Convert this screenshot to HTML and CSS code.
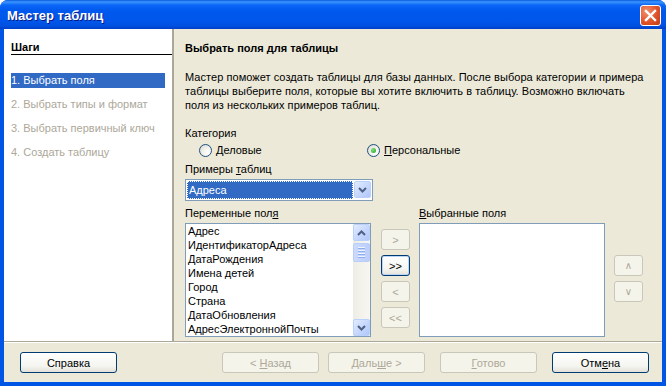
FILE: index.html
```html
<!DOCTYPE html>
<html lang="ru">
<head>
    <meta charset="UTF-8">
    <title>Мастер таблиц</title>
    <link rel="stylesheet" href="styles.css">
</head>
<body>
<div class="window">
    <div class="titlebar">
        <span class="title">Мастер таблиц</span>
        <div class="close">
            <svg width="13" height="13" viewBox="0 0 13 13">
                <path d="M2 2 L11 11 M11 2 L2 11" stroke="#fff" stroke-width="2.4" stroke-linecap="square"/>
            </svg>
        </div>
    </div>
    <div class="client">
        <div class="main">
            <!-- список шагов -->
            <div class="steps">
                <div class="steps-head">Шаги</div>
                <div class="step active">1. Выбрать поля</div>
                <div class="step">2. Выбрать типы и формат</div>
                <div class="step">3. Выбрать первичный ключ</div>
                <div class="step">4. Создать таблицу</div>
            </div>

            <div class="page">
                <div class="page-title">Выбрать поля для таблицы</div>
                <p class="intro">Мастер поможет создать таблицы для базы данных. После выбора категории и примера<br>
                таблицы выберите поля, которые вы хотите включить в таблицу. Возможно включать<br>
                поля из нескольких примеров таблиц.</p>

                <div class="label cat-label">Категория</div>
                <div class="radios">
                    <div class="radio-item first"><span class="radio"></span><span><u>Д</u>еловые</span></div>
                    <div class="radio-item"><span class="radio checked"></span><span><u>П</u>ерсональные</span></div>
                </div>

                <div class="label samples-label">Примеры <u>т</u>аблиц</div>
                <div class="combo">
                    <div class="combo-value">Адреса</div>
                    <div class="sb-btn combo-btn">
                        <svg width="9" height="6" viewBox="0 0 9 6"><path d="M1 1 L4.5 4.5 L8 1" fill="none" stroke="#4D6185" stroke-width="2"/></svg>
                    </div>
                </div>

                <div class="fields">
                    <div class="field-col">
                        <div class="label">Переменные пол<u>я</u></div>
                        <div class="listbox">
                            <div class="items">
                                <div>Адрес</div>
                                <div>ИдентификаторАдреса</div>
                                <div>ДатаРождения</div>
                                <div>Имена детей</div>
                                <div>Город</div>
                                <div>Страна</div>
                                <div>ДатаОбновления</div>
                                <div>АдресЭлектроннойПочты</div>
                            </div>
                            <div class="scrollbar">
                                <div class="sb-btn">
                                    <svg width="9" height="6" viewBox="0 0 9 6"><path d="M1 5 L4.5 1.5 L8 5" fill="none" stroke="#4D6185" stroke-width="2"/></svg>
                                </div>
                                <div class="sb-thumb">
                                    <span></span><span></span><span></span><span></span>
                                </div>
                                <div class="sb-track"></div>
                                <div class="sb-btn">
                                    <svg width="9" height="6" viewBox="0 0 9 6"><path d="M1 1 L4.5 4.5 L8 1" fill="none" stroke="#4D6185" stroke-width="2"/></svg>
                                </div>
                            </div>
                        </div>
                    </div>

                    <div class="move-btns">
                        <div class="btn small disabled">&gt;</div>
                        <div class="btn small focus">&gt;&gt;</div>
                        <div class="btn small disabled">&lt;</div>
                        <div class="btn small disabled">&lt;&lt;</div>
                    </div>

                    <div class="field-col">
                        <div class="label"><u>В</u>ыбранные поля</div>
                        <div class="listbox"></div>
                    </div>

                    <div class="order-btns">
                        <div class="btn small disabled arrow">∧</div>
                        <div class="btn small disabled arrow">∨</div>
                    </div>
                </div>
            </div>
        </div>

        <div class="footer">
            <div class="btn wide"><span>Справка</span></div>
            <div class="btn wide disabled push"><span>&lt; <u>Н</u>азад</span></div>
            <div class="btn wide disabled gap-s"><span>Даль<u>ш</u>е &gt;</span></div>
            <div class="btn wide disabled gap-l"><span><u>Г</u>отово</span></div>
            <div class="btn wide gap-l"><span>Отм<u>е</u>на</span></div>
        </div>
    </div>
</div>
</body>
</html>
```

FILE: styles.css
```css
body {
    margin: 0;
    padding: 0;
    overflow: hidden;
    font-family: "Liberation Sans", Arial, sans-serif;
    font-size: 11px;
    color: #000;
}
u {
    text-decoration: underline;
    text-underline-offset: 1px;
}
.window {
    width: 666px;
    height: 386px;
    display: flex;
    flex-direction: column;
    background: #0055e5;
    border-radius: 8px 8px 0 0;
    overflow: hidden;
}
.titlebar {
    height: 29px;
    flex: none;
    display: flex;
    align-items: center;
    padding: 0 5px 0 7px;
    background: linear-gradient(#0a5ddd 0, #3d95ff 2px, #0a66f6 5px, #0058ee 11px, #0056ea 21px, #0050e0 26px, #003fc6 29px);
}
.title {
    flex: 1;
    color: #fff;
    font-weight: bold;
    font-size: 13px;
    text-shadow: 1px 1px 0 #0a1883;
    padding-top: 1px;
}
.close {
    width: 19px;
    height: 19px;
    margin-top: 1px;
    border: 1px solid #fff;
    border-radius: 3px;
    background: radial-gradient(circle at 30% 30%, #f0906e, #e0532a 55%, #c13a14);
    display: flex;
    align-items: center;
    justify-content: center;
}
.client {
    flex: 1;
    margin: 0 4px 4px;
    background: #ece9d8;
    display: flex;
    flex-direction: column;
}
.main {
    height: 312px;
    display: flex;
    border-bottom: 1px solid #aca899;
}
.steps {
    width: 161px;
    padding-left: 7px;
    background: #fff;
    border-right: 2px solid #aca899;
}
.steps-head {
    margin-top: 12px;
    line-height: 13px;
    font-weight: bold;
    border-bottom: 1px solid #000;
}
.steps-head + .step {
    margin-top: 18px;
}
.step {
    height: 15px;
    line-height: 15px;
    margin-top: 9px;
    margin-right: 7px;
    color: #aca899;
    white-space: nowrap;
}
.step.active {
    background: #316ac5;
    color: #fff;
}
.page {
    flex: 1;
    padding-left: 11px;
}
.page-title {
    margin-top: 12px;
    line-height: 14px;
    font-weight: bold;
}
.intro {
    margin: 15px 0 0;
    line-height: 14px;
    white-space: nowrap;
    letter-spacing: 0.05px;
}
.label {
    line-height: 14px;
    white-space: nowrap;
}
.cat-label {
    margin-top: 14px;
}
.radios {
    display: flex;
    margin-top: 3px;
    height: 14px;
    align-items: center;
}
.radio-item {
    display: flex;
    align-items: center;
    white-space: nowrap;
}
.radio-item.first {
    margin-left: 14px;
    width: 168px;
}
.radio {
    width: 11px;
    height: 11px;
    margin-right: 4px;
    border: 1px solid #1c5180;
    border-radius: 50%;
    background: radial-gradient(circle at 70% 70%, #fff 0, #f4f3ee 40%, #d6d3c8 100%);
    display: flex;
    align-items: center;
    justify-content: center;
}
.radio.checked::after {
    content: "";
    width: 5px;
    height: 5px;
    border-radius: 50%;
    background: radial-gradient(circle at 35% 35%, #7ee07e, #21a121);
}
.samples-label {
    margin-top: 5px;
}
.combo {
    margin-top: 3px;
    width: 184px;
    height: 18px;
    padding: 1px;
    border: 1px solid #7f9db9;
    background: #fff;
    display: flex;
    gap: 1px;
}
.combo-value {
    flex: 1;
    background: #316ac5;
    color: #fff;
    outline: 1px dotted #fff;
    outline-offset: -1px;
    line-height: 18px;
    padding-left: 2px;
}
.combo-btn {
    height: 16px;
}
.sb-btn {
    width: 15px;
    height: 15px;
    border: 1px solid #bad1fc;
    border-radius: 2px;
    background: linear-gradient(135deg, #e2ebfe, #c3d5fd 60%, #b1c7f9);
    display: flex;
    align-items: center;
    justify-content: center;
    flex: none;
}
.fields {
    display: flex;
    margin-top: 5px;
}
.field-col .label {
    margin-bottom: 3px;
}
.listbox {
    width: 184px;
    height: 112px;
    border: 1px solid #7f9db9;
    background: #fff;
    display: flex;
    overflow: hidden;
}
.items {
    flex: 1;
    padding: 0 0 0 2px;
    line-height: 14px;
    white-space: nowrap;
    overflow: hidden;
}
.scrollbar {
    width: 17px;
    display: flex;
    flex-direction: column;
    background: linear-gradient(90deg, #eeede5, #f7f6f1);
}
.sb-thumb {
    height: 17px;
    margin-top: 2px;
    border: 1px solid #b8cdf9;
    border-radius: 2px;
    background: linear-gradient(90deg, #cbdafd, #bccefa);
    display: flex;
    flex-direction: column;
    align-items: center;
    justify-content: center;
    gap: 1px;
}
.sb-thumb span {
    width: 7px;
    height: 1px;
    background: #eef3fe;
    border-bottom: 1px solid #8eaef0;
}
.sb-track {
    flex: 1;
}
.btn {
    box-sizing: border-box;
    height: 21px;
    border: 1px solid #003c74;
    border-radius: 3px;
    background: linear-gradient(#fff, #f4f4f0 70%, #e3e1d8);
    display: flex;
    align-items: center;
    justify-content: center;
    white-space: nowrap;
}
.btn.disabled {
    border-color: #c9c7ba;
    background: #f5f4ea;
    color: #aca899;
}
.btn.small {
    width: 29px;
    height: 21px;
    margin-bottom: 5px;
}
.btn.focus {
    box-shadow: inset 0 0 0 1px #bcd4f6;
}
.btn.arrow {
    font-family: "DejaVu Sans", sans-serif;
    font-size: 10px;
}
.move-btns {
    margin-left: 10px;
    padding-top: 23px;
}
.move-btns + .field-col {
    margin-left: 9px;
}
.order-btns {
    margin-left: 9px;
    padding-top: 49px;
}
.footer {
    flex: 1;
    border-top: 1px solid #fff;
    display: flex;
    padding: 9px 13px 0 16px;
}
.btn.wide {
    width: 97px;
}
.push {
    margin-left: auto;
}
.gap-s {
    margin-left: 9px;
}
.gap-l {
    margin-left: 15px;
}
```
